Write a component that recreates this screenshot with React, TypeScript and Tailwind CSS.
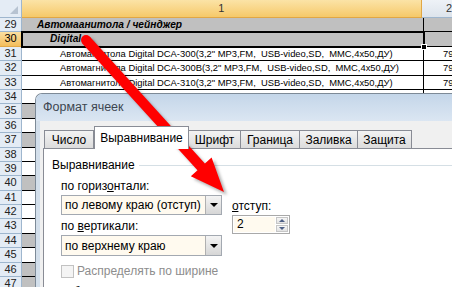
import React from 'react';

const rows = [29, 30, 31, 32, 33, 34, 35, 36, 37, 38, 39, 40, 41, 42, 43, 44, 45, 46, 47];
const greyBelow = [35, 37, 40, 44, 46, 47];
const item = 'Автомагнитола Digital DCA-';
const models = ['300', '300B', '310'];

function RowCells({ n }: { n: number }) {
  if (n === 29) {
    return (
      <>
        <div className="w-[402px] bg-[#c0c0c0] border-b border-r border-black pl-[15px] font-bold italic text-[10.2px] leading-[14px]">
          Автомаанитола / чейнджер
        </div>
        <div className="flex-1 bg-[#c0c0c0] border-b border-black" />
      </>
    );
  }
  if (n === 30) {
    return (
      <>
        <div className="relative w-[402px] bg-[#c0c0c0] border-b border-r border-black outline-2 outline-black -outline-offset-1 pl-[28px] font-bold italic text-[10.2px] leading-[14px]">
          Diqital
          <div className="absolute right-[-4px] bottom-[-4px] w-[6px] h-[6px] bg-black border border-white" />
        </div>
        <div className="flex-1 bg-[#c0c0c0] border-b border-black" />
      </>
    );
  }
  if (n >= 31 && n <= 33) {
    return (
      <>
        <div className="w-[402px] bg-white border-b border-r border-black pl-[38px] text-[9.4px] leading-[14px] whitespace-pre overflow-hidden">
          {item}{models[n - 31]}(3,2" MP3,FM,  USB-video,SD,  MMC,4x50,ДУ)
        </div>
        <div className="flex-1 bg-white border-b border-black pl-[19px] text-[9.4px] leading-[14px] overflow-hidden whitespace-nowrap">79</div>
      </>
    );
  }
  return (
    <>
      <div className={`w-[402px] border-b border-r border-black ${greyBelow.includes(n) ? 'bg-[#c0c0c0]' : 'bg-white'}`} />
      <div className="flex-1 bg-white border-b border-black" />
    </>
  );
}

function Sheet() {
  return (
    <div className="flex flex-col w-[452px] h-[287px] overflow-hidden font-['Liberation_Sans',Arial,sans-serif] text-black">
      <div className="flex h-[18px] shrink-0">
        <div className="relative w-[22px] bg-[#e4ecf5] border-r border-b border-[#9eb6ce]">
          <div className="absolute right-[3px] bottom-[3px] w-0 h-0 border-l-[8px] border-l-transparent border-b-[8px] border-b-[#b7c3d1]" />
        </div>
        <div className="w-[402px] bg-gradient-to-b from-[#fbe3a6] to-[#f6c968] border-r border-b border-[#e1a745] text-center text-[11px] leading-[17px] text-[#333]">1</div>
        <div className="flex-1 bg-gradient-to-b from-[#eef2f7] to-[#dde4ec] border-b border-[#9eb6ce] pl-[24px] text-[11px] leading-[17px] text-[#333]">2</div>
      </div>
      {rows.map((n) => (
        <div key={n} className="flex h-[14.4px] shrink-0">
          <div
            className={`w-[22px] border-r border-b text-center text-[11px] leading-[13px] ${
              n === 30
                ? 'bg-gradient-to-b from-[#fbe0a0] to-[#f3bd5a] border-[#e1a745] text-black'
                : 'bg-[#e4ecf5] border-[#9eb6ce] text-[#222]'
            }`}
          >
            {n}
          </div>
          <RowCells n={n} />
        </div>
      ))}
    </div>
  );
}

function Combo({ text, h }: { text: string; h: string }) {
  return (
    <div className={`flex w-[161px] ${h} border border-[#a3a9b1] bg-[#fffaef]`}>
      <div className="flex-1 pl-[3px] flex items-center text-[12px] whitespace-nowrap">{text}</div>
      <div className="w-[16px] flex items-center justify-center border-l border-[#b0b0b0] bg-gradient-to-b from-[#f4f4f4] to-[#d6d6d6]">
        <div className="w-0 h-0 border-l-[4px] border-l-transparent border-r-[4px] border-r-transparent border-t-[4px] border-t-black" />
      </div>
    </div>
  );
}

function Dialog() {
  const tabs = [
    { t: 'Число', w: 'w-[50px]' },
    { t: 'Выравнивание', w: 'w-[95px]', active: true },
    { t: 'Шрифт', w: 'w-[53px]' },
    { t: 'Граница', w: 'w-[60px]' },
    { t: 'Заливка', w: 'w-[59px]' },
    { t: 'Защита', w: 'w-[55px]' },
  ];
  return (
    <div className="absolute left-[35px] top-[93px] right-0 bottom-0 flex flex-col overflow-hidden rounded-tl-[7px] border-l border-t border-[#7d8a97] font-['Liberation_Sans',Arial,sans-serif] text-black">
      <div className="h-[27px] shrink-0 bg-gradient-to-b from-[#c4d6e9] to-[#dbe6f2] pl-[7px] flex items-center text-[12.5px] text-[#3d4650]">
        Формат ячеек
      </div>
      <div className="flex flex-1">
        <div className="w-[4px] bg-[#d3dfeb]" />
        <div className="flex-1 flex flex-col bg-[#f0f0f0] pl-[3px] pt-[5px]">
          <div className="flex items-end h-[22px] pl-[2px]">
            {tabs.map((tab) =>
              tab.active ? (
                <div key={tab.t} className={`${tab.w} relative z-10 -mb-px h-[23px] bg-white border border-b-0 border-[#898c95] flex items-center justify-center text-[12px]`}>
                  {tab.t}
                </div>
              ) : (
                <div key={tab.t} className={`${tab.w} h-[18px] bg-gradient-to-b from-[#f3f3f3] to-[#dcdcdc] border border-b-0 border-[#898c95] -ml-px flex items-center justify-center text-[12px]`}>
                  {tab.t}
                </div>
              )
            )}
          </div>
          <div className="flex-1 bg-white border-l border-t border-[#898c95] pl-[8px] pt-[9px]">
            <div className="flex items-center h-[14px] text-[12px]">
              <span>Выравнивание</span>
              <div className="flex-1 ml-[4px] h-px bg-[#d5dfe5]" />
            </div>
            <div className="flex gap-[10px] mt-[7px] pl-[9px]">
              <div className="flex flex-col">
                <div className="h-[14px] leading-[14px] text-[12px]">по гориз<u>о</u>нтали:</div>
                <div className="mt-[2px]"><Combo text="по левому краю (отступ)" h="h-[20px]" /></div>
                <div className="mt-[4px] h-[14px] leading-[14px] text-[12px]">по <u>в</u>ертикали:</div>
                <div className="mt-[2px]"><Combo text="по верхнему краю" h="h-[21px]" /></div>
                <div className="mt-[9px] flex items-center h-[13px] gap-[3px]">
                  <div className="w-[13px] h-[13px] border border-[#c2c2c2] bg-[#f4f4f4]" />
                  <span className="text-[12px] text-[#8d8d8d] leading-[13px]">Распределять по ширине</span>
                </div>
              </div>
              <div className="flex flex-col pt-[20px]">
                <div className="h-[14px] leading-[14px] text-[12px]"><u>о</u>тступ:</div>
                <div className="mt-[2px] flex w-[58px] h-[19px] border border-[#a9a9a9] p-px">
                  <div className="w-[41px] bg-[#fffaef] pl-[3px] text-[12px] leading-[15px]">2</div>
                  <div className="flex-1 flex flex-col gap-px ml-px">
                    <div className="flex-1 flex items-center justify-center bg-gradient-to-b from-[#f6f6f6] to-[#e2e2e2] border border-[#c6c6c6]">
                      <div className="w-0 h-0 border-l-[3px] border-l-transparent border-r-[3px] border-r-transparent border-b-[3px] border-b-[#4d5f86]" />
                    </div>
                    <div className="flex-1 flex items-center justify-center bg-gradient-to-b from-[#f6f6f6] to-[#e2e2e2] border border-[#c6c6c6]">
                      <div className="w-0 h-0 border-l-[3px] border-l-transparent border-r-[3px] border-r-transparent border-t-[3px] border-t-[#4d5f86]" />
                    </div>
                  </div>
                </div>
              </div>
            </div>
            <div className="mt-[7px] text-[12px] leading-[14px]">Отображение</div>
          </div>
        </div>
      </div>
    </div>
  );
}

function Arrow() {
  const pts = '89.7,36.6 204.9,163.4 211.6,157.4 224,192 190.8,176.2 197.5,170.2 82.3,43.4';
  return (
    <svg className="absolute inset-0 pointer-events-none" width="452" height="287" viewBox="0 0 452 287">
      <defs>
        <filter id="sh" x="-20%" y="-20%" width="140%" height="140%">
          <feGaussianBlur stdDeviation="1.5" />
        </filter>
      </defs>
      <g transform="translate(3 3)" fill="rgba(0,0,0,0.3)" filter="url(#sh)">
        <polygon points={pts} />
        <circle cx="86" cy="40" r="5" />
      </g>
      <g fill="#ff0000">
        <polygon points={pts} />
        <circle cx="86" cy="40" r="5" />
      </g>
    </svg>
  );
}

export default function App() {
  return (
    <div className="relative w-[452px] h-[287px] overflow-hidden bg-white">
      <Sheet />
      <Dialog />
      <Arrow />
    </div>
  );
}
